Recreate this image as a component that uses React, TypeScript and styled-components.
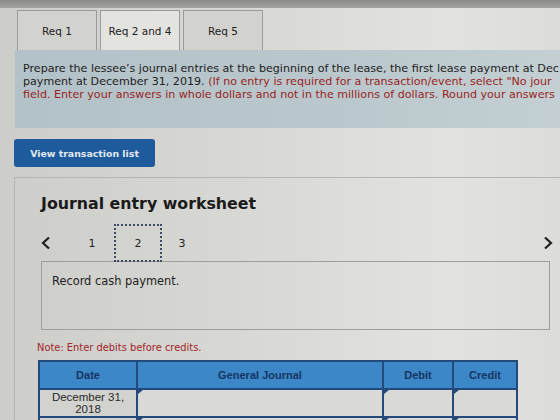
import React from 'react';
import styled, { createGlobalStyle } from 'styled-components';

const GlobalStyle = createGlobalStyle`
  html, body {
    margin: 0;
    padding: 0;
    overflow: hidden;
  }
  body {
    width: 560px;
    height: 420px;
    background: linear-gradient(90deg, #cdcdca 0%, #d8d8d4 45%, #e2e2df 80%, #dcdcd9 100%);
    font-family: 'DejaVu Sans', Verdana, sans-serif;
    color: #222;
  }
`;

const TopStrip = styled.div`
  height: 8px;
  background: linear-gradient(180deg, #8c8c8c, #a4a4a2);
`;

const TabRow = styled.div`
  display: flex;
  gap: 3px;
  padding: 2px 0 0 17px;
`;

const Tab = styled.div<{ $active?: boolean }>`
  width: 80px;
  height: 40px;
  box-sizing: border-box;
  display: flex;
  align-items: center;
  justify-content: center;
  border: 1px solid #9a9a98;
  border-bottom: none;
  background: ${(p) => (p.$active ? '#e3e3e0' : '#d2d2cf')};
  font-size: 10.5px;
  color: #222;
`;

const Prompt = styled.div`
  margin-left: 15px;
  height: 78px;
  box-sizing: border-box;
  padding: 12px 0 0 8px;
  background: linear-gradient(90deg, #b3c2c8, #bac8cd 60%, #c3cfd3);
  font-size: 11.1px;
  line-height: 13px;
  white-space: nowrap;
  overflow: hidden;
`;

const Hint = styled.span`
  color: #9a1f22;
`;

const Body = styled.div`
  margin-left: 14px;
  padding-top: 11px;
`;

const BlueButton = styled.button`
  width: 141px;
  height: 28px;
  border: none;
  border-radius: 3px;
  background: #1d5b9d;
  color: #e4e9ef;
  font-family: 'DejaVu Sans', Verdana, sans-serif;
  font-weight: bold;
  font-size: 9.4px;
  padding: 0;
`;

const Worksheet = styled.section`
  margin-top: 10px;
  border-top: 1px solid #b4b4b1;
  border-left: 1px solid #b4b4b1;
  padding: 15px 10px 0 26px;
  height: 228px;
  overflow: hidden;
`;

const Title = styled.h2`
  margin: 0;
  font-size: 15.8px;
  font-weight: bold;
  color: #1a1a1a;
  line-height: 22px;
`;

const Pager = styled.div`
  display: flex;
  align-items: center;
  height: 38px;
  margin-top: 9px;
`;

const Chevron = styled.div<{ $right?: boolean }>`
  width: ${(p) => (p.$right ? 'auto' : '29px')};
  margin-left: ${(p) => (p.$right ? 'auto' : '0')};
  margin-right: ${(p) => (p.$right ? '-3px' : '0')};
  display: flex;
  align-items: center;
`;

const PageNum = styled.div<{ $current?: boolean; $w: number }>`
  width: ${(p) => p.$w}px;
  height: 38px;
  box-sizing: border-box;
  display: flex;
  align-items: center;
  justify-content: center;
  font-size: 11px;
  color: #222;
  border: ${(p) => (p.$current ? '2px dotted #3b4a66' : 'none')};
`;

const RecordBox = styled.div`
  margin-top: -1px;
  height: 69px;
  box-sizing: border-box;
  border: 1px solid #9e9e9b;
  padding: 12px 10px;
  font-size: 11.4px;
`;

const Note = styled.div`
  margin: 12px 0 0 -4px;
  font-size: 9.9px;
  color: #a3262a;
`;

const Journal = styled.table`
  margin: 7px 0 0 -3px;
  border-collapse: collapse;
  font-family: 'Liberation Sans', Arial, sans-serif;
  table-layout: fixed;
`;

const HeadCell = styled.th<{ $w: number }>`
  width: ${(p) => p.$w}px;
  height: 26px;
  padding: 0;
  background: #3b87c7;
  border: 2px solid #24497a;
  color: #173563;
  font-size: 11px;
  font-weight: bold;
`;

const Cell = styled.td<{ $input?: boolean }>`
  position: relative;
  height: 26px;
  padding: 0;
  border: 2px solid #24497a;
  border-top-width: ${(p) => (p.$input ? '2px' : '1px')};
  background: ${(p) => (p.$input ? '#d9d9d6' : '#d2d2cf')};
  font-size: 11.5px;
  line-height: 12px;
  text-align: center;
  color: #2a2a2a;

  &::before {
    content: '';
    display: ${(p) => (p.$input ? 'block' : 'none')};
    position: absolute;
    top: 0;
    left: 0;
    border-left: 5px solid #24497a;
    border-bottom: 4px solid transparent;
  }
`;

const Arrow = ({ right }: { right?: boolean }) => (
  <svg width="10" height="14" viewBox="0 0 10 14">
    <path
      d={right ? 'M2 1.5 L8 7 L2 12.5' : 'M8 1.5 L2 7 L8 12.5'}
      fill="none"
      stroke="#1e1e1e"
      strokeWidth="2.2"
    />
  </svg>
);

export default function App() {
  return (
    <>
      <GlobalStyle />
      <TopStrip />
      <TabRow>
        <Tab>Req 1</Tab>
        <Tab $active>Req 2 and 4</Tab>
        <Tab>Req 5</Tab>
      </TabRow>
      <Prompt>
        Prepare the lessee’s journal entries at the beginning of the lease, the first lease payment at Dec
        <br />
        payment at December 31, 2019. <Hint>(If no entry is required for a transaction/event, select "No jour</Hint>
        <br />
        <Hint>field. Enter your answers in whole dollars and not in the millions of dollars. Round your answers</Hint>
      </Prompt>
      <Body>
        <BlueButton>View transaction list</BlueButton>
        <Worksheet>
          <Title>Journal entry worksheet</Title>
          <Pager>
            <Chevron>
              <Arrow />
            </Chevron>
            <PageNum $w={44}>1</PageNum>
            <PageNum $w={48} $current>
              2
            </PageNum>
            <PageNum $w={40}>3</PageNum>
            <Chevron $right>
              <Arrow right />
            </Chevron>
          </Pager>
          <RecordBox>Record cash payment.</RecordBox>
          <Note>Note: Enter debits before credits.</Note>
          <Journal>
            <thead>
              <tr>
                <HeadCell $w={96}>Date</HeadCell>
                <HeadCell $w={244}>General Journal</HeadCell>
                <HeadCell $w={68}>Debit</HeadCell>
                <HeadCell $w={62}>Credit</HeadCell>
              </tr>
            </thead>
            <tbody>
              <tr>
                <Cell>
                  December 31,
                  <br />
                  2018
                </Cell>
                <Cell $input />
                <Cell $input />
                <Cell $input />
              </tr>
              <tr>
                <Cell />
                <Cell $input />
                <Cell $input />
                <Cell $input />
              </tr>
            </tbody>
          </Journal>
        </Worksheet>
      </Body>
    </>
  );
}
